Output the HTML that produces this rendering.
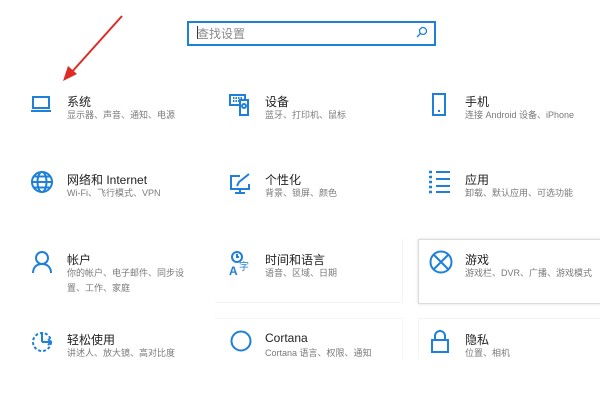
<!DOCTYPE html>
<html><head><meta charset="utf-8"><style>
body{margin:0;width:600px;height:400px;background:#fff;position:relative;overflow:hidden;font-family:"Liberation Sans","Noto Sans CJK SC",sans-serif}
.t{position:absolute;font-size:12px;color:#222;white-space:nowrap}
.s{position:absolute;font-size:9px;color:#7a7a7a;line-height:15px;white-space:nowrap}
svg.i{position:absolute;fill:none;stroke:#1e80d8;stroke-width:2}
.card{position:absolute;border:1px solid #e4e4e4}
</style></head><body>
<div class="card" style="left:418px;top:239px;width:190px;height:63px;border-color:#dcdcdc;box-shadow:0 0 3px #ddd"></div>
<div class="card" style="left:215px;top:239px;width:187px;height:63px;border-color:#f3f3f3;border-left:none;border-top:none"></div>
<div class="card" style="left:418px;top:318px;width:190px;height:40px;border-color:#f3f3f3;border-bottom:none;border-right:none"></div>
<div class="card" style="left:215px;top:318px;width:187px;height:40px;border-color:#f6f6f6;border-left:none;border-bottom:none"></div>
<div style="position:absolute;left:187px;top:21px;width:245px;height:21px;border:2px solid #1e80d8;background:#fff"></div>
<div style="position:absolute;left:197px;top:26px;width:1px;height:13px;background:#333"></div>
<div class="t" style="left:197px;top:25px;font-size:12px;color:#888">查找设置</div>
<svg style="position:absolute;left:416px;top:26px" width="12" height="12"><circle cx="7" cy="5" r="3.5" fill="none" stroke="#1e80d8" stroke-width="1.3"/><line x1="4.5" y1="7.5" x2="1" y2="11" stroke="#1e80d8" stroke-width="1.3"/></svg>
<svg style="position:absolute;left:60px;top:14px" width="70" height="70"><line x1="62" y1="2" x2="10" y2="60" stroke="#e02a25" stroke-width="2"/><polygon points="3,67 8,52 17,60" fill="#e02a25"/></svg>

<svg class="i" style="left:30px;top:95px" width="22" height="18" stroke-width="1.5"><rect x="3" y="2" width="16" height="11"/><line x1="1" y1="16" x2="21" y2="16"/></svg>
<div class="t" style="left:67px;top:93px">系统</div><div class="s" style="left:67px;top:108px">显示器、声音、通知、电源</div>

<svg class="i" style="left:228px;top:93px" width="26" height="24" stroke-width="1.5"><rect x="2" y="2" width="15" height="10"/><rect x="12" y="7" width="8" height="15" fill="#fff"/><circle cx="16" cy="13" r="2"/><line x1="5" y1="5" x2="14" y2="5" stroke-dasharray="1.5 1"/><line x1="5" y1="8" x2="11" y2="8" stroke-dasharray="1.5 1"/></svg>
<div class="t" style="left:265px;top:93px">设备</div><div class="s" style="left:265px;top:108px">蓝牙、打印机、鼠标</div>

<svg class="i" style="left:431px;top:92px" width="16" height="26" stroke-width="1.5"><rect x="2" y="2" width="12" height="21"/><line x1="7" y1="19" x2="9" y2="19"/></svg>
<div class="t" style="left:465px;top:93px">手机</div><div class="s" style="left:465px;top:108px">连接 Android 设备、iPhone</div>

<svg class="i" style="left:30px;top:170px" width="24" height="24" stroke-width="1.6"><circle cx="12" cy="12" r="10"/><ellipse cx="12" cy="12" rx="4.5" ry="10"/><line x1="2" y1="12" x2="22" y2="12"/><path d="M4 6.5h16M4 17.5h16"/></svg>
<div class="t" style="left:67px;top:171px">网络和 Internet</div><div class="s" style="left:67px;top:186px">Wi-Fi、飞行模式、VPN</div>

<svg class="i" style="left:228px;top:172px" width="26" height="24" stroke-width="1.5"><path d="M12 4H3v13h18v-5"/><line x1="12" y1="17" x2="12" y2="21"/><line x1="7" y1="21" x2="17" y2="21"/><path d="M9 14l2-4 10-8"/></svg>
<div class="t" style="left:265px;top:171px">个性化</div><div class="s" style="left:265px;top:186px">背景、锁屏、颜色</div>

<svg class="i" style="left:428px;top:170px" width="24" height="24" stroke-width="1.6"><path d="M1 2h3M1 7h3M1 12h3M1 17h3M1 22h3" stroke-width="2.5"/><path d="M8 2h14M8 9h14M8 16h14M8 22h14"/></svg>
<div class="t" style="left:465px;top:171px">应用</div><div class="s" style="left:465px;top:186px">卸载、默认应用、可选功能</div>

<svg class="i" style="left:31px;top:250px" width="22" height="24" stroke-width="1.6"><circle cx="11" cy="8" r="6"/><path d="M2 23c0-6 4-9 9-9s9 3 9 9"/></svg>
<div class="t" style="left:67px;top:251px">帐户</div><div class="s" style="left:67px;top:266px">你的帐户、电子邮件、同步设<br>置、工作、家庭</div>

<svg class="i" style="left:229px;top:250px" width="26" height="26" stroke-width="1.5"><circle cx="8" cy="7" r="5"/><path d="M8 4v3h2"/><text x="0" y="25" font-size="12" fill="#1e80d8" stroke="none" font-weight="bold" font-family="Liberation Sans">A</text><text x="10" y="20" font-size="10" fill="#1e80d8" stroke="none" font-family="Noto Sans CJK SC">字</text></svg>
<div class="t" style="left:265px;top:251px">时间和语言</div><div class="s" style="left:265px;top:266px">语音、区域、日期</div>

<svg class="i" style="left:428px;top:249px" width="26" height="26" stroke-width="2"><circle cx="13" cy="13" r="10.5"/><path d="M6 6l14 14M20 6L6 20"/></svg>
<div class="t" style="left:465px;top:251px">游戏</div><div class="s" style="left:465px;top:266px">游戏栏、DVR、广播、游戏模式</div>

<svg class="i" style="left:30px;top:330px" width="24" height="24" stroke-width="1.6"><path d="M12 12V2" /><path d="M12 12h9M18 9l3 3-3 3"/><circle cx="12" cy="12" r="9" stroke-dasharray="3 2"/></svg>
<div class="t" style="left:67px;top:331px">轻松使用</div><div class="s" style="left:67px;top:346px">讲述人、放大镜、高对比度</div>

<svg class="i" style="left:229px;top:329px" width="24" height="24" stroke-width="2.5"><circle cx="12" cy="12" r="9.5"/></svg>
<div class="t" style="left:265px;top:331px">Cortana</div><div class="s" style="left:265px;top:346px">Cortana 语言、权限、通知</div>

<svg class="i" style="left:430px;top:329px" width="20" height="26" stroke-width="1.6"><path d="M5 11V7a5 5 0 0 1 10 0v4"/><rect x="2" y="11" width="16" height="12"/></svg>
<div class="t" style="left:465px;top:331px">隐私</div><div class="s" style="left:465px;top:346px">位置、相机</div>
</body></html>
